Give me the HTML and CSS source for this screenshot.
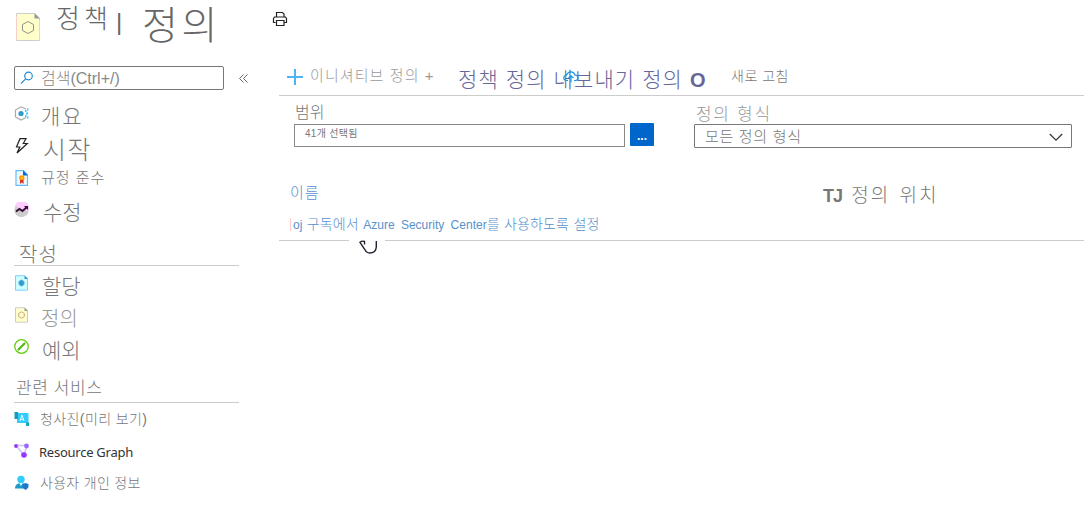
FILE: index.html
```html
<!DOCTYPE html>
<html lang="ko">
<head>
<meta charset="utf-8">
<title>정책 | 정의</title>
<link rel="stylesheet" href="styles.css">
</head>
<body>
<header class="header">
  <svg class="header-icon" width="24" height="28" viewBox="0 0 24 28"><path d="M.5.5h18l5 5v22H.5z" fill="#ffc" stroke="#ccc"/><path d="M.5 3v24M23.500 7v19" stroke="#fcc"/><path d="M18.500 0v5.500H24z" fill="#999"/><path d="M12 8.500l5.500 3v6L12 20.500l-5.500-3v-6z" fill="none" stroke="#998f80"/></svg>
  <h1 class="title"><span class="title-service">정책</span><span class="title-bar">|</span><span class="title-page">정의</span></h1>
  <svg class="print" width="16" height="16" viewBox="0 0 16 16" fill="none" stroke="#222" stroke-width="1.200"><path d="M4.500 6V1.500h6L12 3v3M3.500 11.500h-2v-4l1-1.500h11l1 1.500v4h-2M4.500 9.500h7.500v5H4.500z"/></svg>
</header>
<div class="body">
  <nav class="sidebar">
    <div class="search-row">
      <div class="search">
        <svg width="14" height="14" viewBox="0 0 14 14" fill="none" stroke="#1e8ad6" stroke-width="1.200"><circle cx="8.500" cy="5" r="3.800"/><path d="M5.700 7.800L1 12.500"/></svg>
        <span class="search-text">검색(Ctrl+/)</span>
      </div>
      <svg class="collapse" width="10" height="9" viewBox="0 0 10 9" fill="none" stroke="#666"><path d="M4.500.5l-4 4 4 4M8.500.5l-4 4 4 4"/></svg>
    </div>
    <ul class="menu">
      <li><svg class="icon" viewBox="0 0 16 16"><path d="M12 3L7 .8 1.500 4v7L7 14l5-2.500" fill="none" stroke="#aaa" stroke-width="1.200"/><circle cx="7" cy="7.500" r="2.600" fill="#39c"/><path d="M11 5h1.500M12 7.500h2M11 10h1.500M13 3.500h1.500M13 11.500h1.500" stroke="#3cf" stroke-width="2"/></svg><span class="label overview">개요</span></li>
      <li><svg class="icon" viewBox="0 0 16 16"><path d="M6 .7h6L9.300 5.500h4L3 15l2.800-6H2.500z" fill="#fff" stroke="#222" stroke-width="1.200"/></svg><span class="label start">시작</span></li>
      <li><svg class="icon" viewBox="0 0 16 16"><path d="M2 .7h7.500l4 4v10.600H2z" fill="#eef9ff" stroke="#6bf" stroke-width="1.200"/><path d="M9 .5v5h5z" fill="#06c"/><circle cx="7.800" cy="8" r="2.700" fill="#f90"/><path d="M6 10h3.600v4l-1.800-1.500L6 14z" fill="#d32"/><circle cx="7.800" cy="8" r="1" fill="#fc3"/></svg><span class="label compliance">규정 준수</span></li>
      <li><svg class="icon" viewBox="0 0 16 16"><circle cx="7.500" cy="8" r="7.200" fill="#ccc"/><path d="M7.500 8L1 3.500A7.300 7.300 0 0 1 14.700 9z" fill="#fcf"/><path d="M2 9.500L5.500 7l3 2 4.500-4" fill="none" stroke="#313" stroke-width="2"/><path d="M10 4h4v4z" fill="#313"/></svg><span class="label remedy">수정</span></li>
    </ul>
    <h2 class="group authoring">작성</h2>
    <ul class="menu">
      <li><svg class="icon" viewBox="0 0 16 16"><path d="M1.500.7h9l3 3v11.500h-12z" fill="#cff" stroke="#8cf"/><path d="M10.500.5v3.500H14z" fill="#39c"/><path d="M7.500 5l2.500 1.500v3L7.500 11 5 9.500v-3z" fill="#39c" stroke="#6ac"/></svg><span class="label assign">할당</span></li>
      <li><svg class="icon" viewBox="0 0 16 16"><path d="M1.500.7h9l3 3v11.500h-12z" fill="#ffc" stroke="#ccc"/><path d="M10.500.5v3.500H14z" fill="#999"/><path d="M7.500 4.800l2.800 1.600v3.200l-2.800 1.600-2.800-1.600V6.400z" fill="none" stroke="#cbab88"/></svg><span class="label define">정의</span></li>
      <li><svg class="icon" viewBox="0 0 16 16"><circle cx="7.500" cy="7.500" r="6.800" fill="#fff" stroke="#6c1" stroke-width="1.300"/><path d="M4.500 10.500l6-6" stroke="#5b1" stroke-width="2.200" stroke-linecap="round"/></svg><span class="label exempt">예외</span></li>
    </ul>
    <h2 class="group related">관련 서비스</h2>
    <ul class="menu">
      <li><svg class="icon" viewBox="0 0 16 16"><path d="M3 2h11.500v10H3z" fill="#3cf"/><path d="M.5 1H4v7H.5z" fill="#189ab8"/><path d="M12 11.500h3V15h-3z" fill="#1ab"/><path d="M6 10l2-6 2 6M6.500 8.300h3" fill="none" stroke="#dff"/></svg><span class="label blueprint">청사진(미리 보기)</span></li>
      <li><svg class="icon" viewBox="0 0 16 16"><path d="M2 2.500h11L10 12z" fill="none" stroke="#c9c3ff" stroke-width="1.500"/><circle cx="2" cy="3" r="1.900" fill="#93f"/><circle cx="12.500" cy="3" r="2.400" fill="#96f"/><circle cx="10" cy="12" r="2.800" fill="#93f"/></svg><span class="label graph">Resource Graph</span></li>
      <li><svg class="icon" viewBox="0 0 16 16"><circle cx="7" cy="4.500" r="3.700" fill="#3cf"/><path d="M1 13.500c0-4 3-5.500 6-5.500s5 1.500 5 5.500z" fill="#29c"/><path d="M5 8l2 3 2-3z" fill="#cff"/><path d="M11.500 8l3 1v3q-1 2-3 3-2-1-3-3V9z" fill="#27c"/></svg><span class="label privacy">사용자 개인 정보</span></li>
    </ul>
  </nav>
  <main class="main">
    <div class="commands">
      <svg class="plus" width="16" height="16" viewBox="0 0 16 16" fill="none" stroke="#4db5f5" stroke-width="2"><path d="M8 0v16M0 8h16"/></svg>
      <span class="cmd-initiative">이니셔티브 정의 +</span>
      <span class="cmd-policy">정책 정의 내보내기 정의 <b>O</b><svg class="cloud" width="16" height="12" viewBox="0 0 16 12" fill="none" stroke="#1998e8" stroke-width="1.200"><path d="M5 9.500H3.500a2.700 2.700 0 0 1 0-5.400Q5 .8 8 .8t4 3.300a2.700 2.700 0 0 1 .5 5.400H11M8 11.500V5M5.500 7L8 4.800 10.500 7"/></svg></span>
      <span class="cmd-refresh">새로 고침</span>
    </div>
    <div class="filters">
      <div class="scope">
        <label class="scope-label">범위</label>
        <div class="scope-row"><div class="scope-box">41개 선택됨</div><button class="more">...</button></div>
      </div>
      <div class="kind">
        <label class="kind-label">정의 형식</label>
        <div class="select"><span>모든 정의 형식</span><svg width="14" height="9" viewBox="0 0 14 9" fill="none" stroke="#333" stroke-width="1.200"><path d="M.8 1L7 7.200 13.200 1"/></svg></div>
      </div>
    </div>
    <div class="table-head"><span class="col-name">이름</span><span class="col-place"><b>TJ</b> 정의 위치</span></div>
    <div class="table-row"><i class="mark"></i><span class="link"><span class="lat">oj</span> 구독에서 <span class="lat">Azure Security Center</span>를 사용하도록 설정</span>
      <span class="cursor"><svg width="20" height="15" viewBox="0 0 20 15" fill="none" stroke="#223" stroke-width="1.400"><path d="M6.500 4.500V1.500Q4 .5 2 2.300L6.500 9q2 4 5 4 6.500 0 6.800-6V1"/></svg></span>
    </div>
  </main>
</div>
</body>
</html>
```
FILE: styles.css
```css
* { box-sizing: border-box; }
body {
  margin: 0;
  width: 1084px;
  height: 530px;
  overflow: hidden;
  background: #fff;
  color: #777;
  font-family: "Liberation Sans", "Noto Sans CJK KR", sans-serif;
  font-weight: 300;
  white-space: nowrap;
}
h1, h2, ul { margin: 0; padding: 0; font-weight: 300; list-style: none; }
b { font-weight: 700; }
svg { display: block; flex: none; }
.header { display: flex; align-items: flex-start; height: 66px; padding-left: 16px; }
.header-icon { margin-top: 13px; }
.title { display: flex; align-items: flex-start; width: 232px; padding-left: 16px; color: #666; }
.title-service { width: 60px; padding-top: 4px; font-size: 26px; line-height: 30px; letter-spacing: 4px; }
.title-bar { width: 26px; padding-top: 8px; font-size: 24px; line-height: 28px; }
.title-page { padding-top: 4px; font-size: 39px; line-height: 44px; letter-spacing: 3.5px; }
.print { margin-top: 11px; }
.body { display: flex; }
.sidebar { width: 279px; flex: none; padding-left: 14px; }
.search-row { display: flex; align-items: center; height: 24px; margin-bottom: 8px; }
.search { display: flex; align-items: center; width: 210px; height: 24px; padding-left: 5px; border: 1px solid #777; border-radius: 2px; color: #888; }
.search-text { padding: 2px 0 0 7px; font-size: 16px; line-height: 20px; }
.collapse { margin-left: 15px; }
.menu li { display: flex; align-items: center; height: 32px; }
.icon { width: 16px; height: 16px; }
.label { line-height: 28px; }
.overview { padding: 6px 0 0 11px; font-size: 21px; letter-spacing: 2px; }
.start { padding: 8px 0 0 13px; font-size: 25px; letter-spacing: 1.5px; }
.compliance { padding-left: 11px; font-size: 15px; letter-spacing: 1px; }
.remedy { padding: 5px 0 0 13px; font-size: 21px; }
.group { border-bottom: 1px solid #ccc; width: 225px; }
.authoring { height: 40px; margin-bottom: 1px; padding: 16px 0 0 5px; font-size: 20px; line-height: 26px; letter-spacing: 1px; }
.assign { padding: 8px 0 0 12px; font-size: 21px; }
.define { padding: 8px 0 0 11px; font-size: 20px; color: #999; }
.exempt { padding: 8px 0 0 12px; font-size: 21px; }
.related { height: 40px; padding: 13px 0 0 2px; font-size: 17px; line-height: 26px; letter-spacing: .6px; }
.blueprint { padding-left: 10px; font-size: 14px; letter-spacing: .4px; }
.graph { padding: 2px 0 0 9px; font-family: "Noto Sans", sans-serif; font-size: 13px; font-weight: 400; letter-spacing: -.25px; color: #333; }
.privacy { padding-left: 10px; font-size: 14px; letter-spacing: .3px; }
.main { width: 805px; }
.commands { display: flex; align-items: flex-start; height: 30px; padding-left: 8px; border-bottom: 1px solid #ccc; }
.plus { margin-top: 3px; }
.cmd-initiative { width: 155px; padding-left: 7px; font-size: 15px; line-height: 20px; letter-spacing: 1.1px; color: #999; }
.cmd-policy { position: relative; width: 273px; font-size: 21px; line-height: 28px; letter-spacing: 1.1px; color: #669; }
.cmd-policy b { font-size: 20px; }
.cloud { position: absolute; left: 105px; top: 5px; }
.cmd-refresh { font-size: 14px; line-height: 20px; letter-spacing: .5px; }
.filters { display: flex; height: 52px; padding: 7px 0 0 15px; }
.scope { width: 400px; }
.scope-label { display: block; height: 20px; padding-left: 1px; font-size: 16px; line-height: 20px; }
.scope-row { display: flex; gap: 5px; }
.scope-box { width: 331px; height: 23px; margin-top: 1px; padding-left: 10px; border: 1px solid #888; font-size: 10px; font-weight: 400; line-height: 18px; letter-spacing: .3px; }
.more { width: 24px; height: 23px; padding: 3px 0 0; border: 0; border-radius: 1px; background: #06c; color: #fff; font: bold 12px/20px "Liberation Sans", sans-serif; }
.kind-label { display: block; height: 21px; padding: 1px 0 0 2px; font-size: 17px; line-height: 21px; letter-spacing: 1.7px; color: #999; }
.select { display: flex; align-items: center; justify-content: space-between; width: 378px; height: 24px; padding: 2px 8px 0 10px; border: 1px solid #777; border-radius: 1px; font-size: 15px; line-height: 22px; letter-spacing: .7px; }
.table-head { display: flex; align-items: flex-start; height: 64px; padding: 35px 0 0 11px; }
.col-name { width: 533px; font-size: 15px; line-height: 20px; letter-spacing: 1px; color: #5791cb; }
.col-place { padding-top: 1px; font-size: 19px; line-height: 24px; letter-spacing: 2px; word-spacing: 2px; }
.col-place b { font-size: 18px; letter-spacing: -1px; }
.table-row { position: relative; display: flex; align-items: center; height: 29px; padding: 0 0 4px 11px; border-bottom: 1px solid #ccc; color: #5791cb; }
.mark { width: 1px; height: 13px; margin-right: 2px; background: #fcc; }
.link { font-size: 14px; line-height: 20px; letter-spacing: .1px; word-spacing: .5px; }
.lat { font-size: 12px; letter-spacing: 0; word-spacing: 3px; }
.cursor { position: absolute; left: 70px; top: 28px; width: 36px; height: 16px; padding-left: 9px; background: #fff; }
```
